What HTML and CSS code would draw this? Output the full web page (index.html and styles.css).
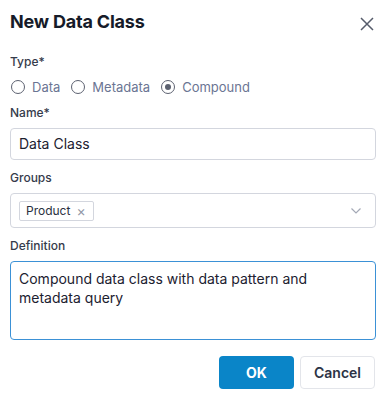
FILE: index.html
```html
<!DOCTYPE html>
<html lang="en">
<head>
    <meta charset="UTF-8">
    <meta name="viewport" content="width=device-width, initial-scale=1.0">
    <title>New Data Class</title>
    <link rel="stylesheet" href="styles.css">
</head>
<body>
    <div class="dialog">
        <div class="dialog-header">
            <div class="dialog-title">New Data Class</div>
            <button class="close-btn" aria-label="Close">
                <svg width="14" height="14" viewBox="0 0 14 14">
                    <path d="M1 1 L13 13 M13 1 L1 13" stroke="#565c6b" stroke-width="1.5" fill="none"/>
                </svg>
            </button>
        </div>

        <div class="field">
            <div class="field-label">Type*</div>
            <div class="radio-group">
                <label class="radio"><span class="radio-dot"></span>Data</label>
                <label class="radio"><span class="radio-dot"></span>Metadata</label>
                <label class="radio"><span class="radio-dot checked"></span>Compound</label>
            </div>
        </div>

        <div class="field">
            <div class="field-label">Name*</div>
            <div class="text-input">Data Class</div>
        </div>

        <div class="field">
            <div class="field-label">Groups</div>
            <div class="select">
                <span class="tag">Product <span class="tag-x">&times;</span></span>
                <svg class="chevron" width="10" height="6" viewBox="0 0 10 6">
                    <path d="M0.5 0.5 L5 5 L9.5 0.5" stroke="#a4a9b6" stroke-width="1.2" fill="none"/>
                </svg>
            </div>
        </div>

        <div class="field">
            <div class="field-label">Definition</div>
            <div class="textarea">Compound data class with data pattern and metadata query</div>
        </div>

        <div class="dialog-footer">
            <button class="btn btn-primary">OK</button>
            <button class="btn btn-secondary">Cancel</button>
        </div>
    </div>
</body>
</html>
```

FILE: styles.css
```css
body {
    font-family: Inter, "Noto Sans", sans-serif;
    margin: 0;
    padding: 0;
    background: #fff;
    color: #1c2130;
}
.dialog {
    padding: 10px 12px 0 10px;
}
.dialog-header {
    display: flex;
    justify-content: space-between;
    align-items: center;
    height: 24px;
    margin-bottom: 19px;
}
.dialog-title {
    font-size: 18px;
    font-weight: 700;
    line-height: 24px;
    letter-spacing: -0.2px;
    color: #161b29;
}
.close-btn {
    border: none;
    background: none;
    padding: 0;
    margin: 3px 2px 0 0;
    width: 14px;
    height: 14px;
    display: flex;
}
.field {
    margin-bottom: 9px;
}
.field-label {
    font-size: 12px;
    font-weight: 500;
    line-height: 18px;
    color: #353b4b;
}
.radio-group {
    display: flex;
    align-items: center;
    gap: 10px;
    height: 17px;
    margin-top: 7px;
}
.radio {
    display: flex;
    align-items: center;
    gap: 7px;
    font-size: 13px;
    color: #6b7593;
    padding-left: 1px;
}
.radio-dot {
    width: 14px;
    height: 14px;
    box-sizing: border-box;
    border: 1.5px solid #5c6170;
    border-radius: 50%;
    display: flex;
    align-items: center;
    justify-content: center;
}
.radio-dot.checked::after {
    content: "";
    width: 6px;
    height: 6px;
    border-radius: 50%;
    background: #5c6170;
}
.text-input {
    margin-top: 6px;
    height: 32px;
    box-sizing: border-box;
    border: 1px solid #d3d6de;
    border-radius: 4px;
    padding: 0 8px;
    font-size: 14px;
    line-height: 30px;
    color: #1c2130;
}
.select {
    margin-top: 6px;
    height: 35px;
    box-sizing: border-box;
    border: 1px solid #d3d6de;
    border-radius: 4px;
    padding: 0 14px 0 8px;
    display: flex;
    align-items: center;
    justify-content: space-between;
}
.tag {
    display: inline-flex;
    align-items: center;
    gap: 6px;
    height: 20px;
    box-sizing: border-box;
    border: 1px solid #d3d6de;
    border-radius: 2px;
    padding: 0 7px 0 6px;
    font-size: 12px;
    color: #2a3040;
}
.tag-x {
    color: #9197a6;
    font-size: 14px;
}
.textarea {
    margin-top: 6px;
    height: 79px;
    box-sizing: border-box;
    border: 1px solid #3b91d6;
    border-radius: 4px;
    padding: 7px 8px;
    font-size: 14px;
    line-height: 19px;
    color: #1c2130;
}
.dialog-footer {
    display: flex;
    justify-content: flex-end;
    gap: 6px;
    margin-top: 16px;
    padding-right: 1px;
}
.btn {
    width: 75px;
    height: 33px;
    border-radius: 4px;
    font-family: Inter, "Noto Sans", sans-serif;
    font-size: 14px;
    font-weight: 600;
}
.btn-primary {
    background: #0a85c8;
    border: none;
    color: #fff;
    font-weight: 700;
}
.btn-secondary {
    background: #fff;
    border: 1px solid #e3e5ea;
    color: #2c3345;
}
```
